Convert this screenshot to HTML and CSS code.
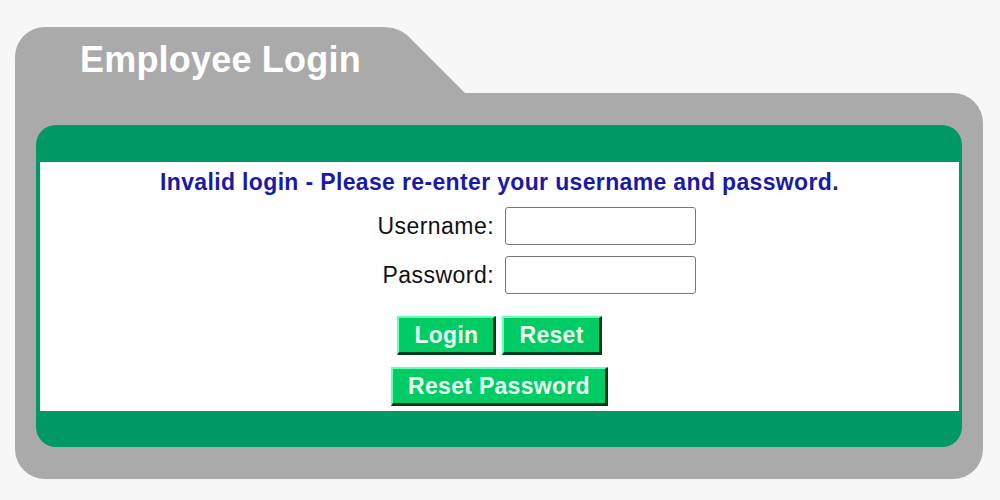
FILE: index.html
```html
<!DOCTYPE html>
<html>
<head>
<meta charset="utf-8">
<title>Employee Login</title>
<link rel="stylesheet" href="styles.css">
</head>
<body>
<div class="folder">
  <div class="tab"><h1 class="title">Employee Login</h1></div>
  <div class="folder-body">
    <div class="panel">
      <form class="panel-inner">
        <p class="error">Invalid login - Please re-enter your username and password.</p>
        <div class="fields">
          <label class="label" for="u">Username:</label>
          <input class="field" id="u" type="text">
          <label class="label" for="p">Password:</label>
          <input class="field" id="p" type="password">
        </div>
        <div class="btn-row">
          <button class="btn" type="button">Login</button>
          <button class="btn" type="reset">Reset</button>
        </div>
        <div class="btn-row">
          <button class="btn" type="button">Reset Password</button>
        </div>
      </form>
    </div>
  </div>
</div>
</body>
</html>
```
FILE: styles.css
```css
html, body {
  margin: 0;
  padding: 0;
  background: #f7f7f7;
  font-family: "Liberation Sans", Arial, sans-serif;
}

.folder {
  width: 968px;
  margin: 27px 0 0 15px;
  display: flex;
  flex-direction: column;
}

.tab {
  width: 450px;
  height: 66px;
  background: #aaaaaa;
  border-top-left-radius: 30px;
  clip-path: polygon(0 0, 368px 0, 378px 1px, 386px 4px, 392px 8px, 398px 14px, 450px 66px, 0 66px);
  box-sizing: border-box;
  padding: 15px 0 0 65px;
}

.title {
  margin: 0;
  font-size: 36px;
  line-height: 36px;
  font-weight: bold;
  letter-spacing: 0.2px;
  color: #ffffff;
}

.folder-body {
  background: #aaaaaa;
  border-radius: 0 30px 30px 30px;
  padding: 32px 21px 32px 21px;
}

.panel {
  background: #009966;
  border-radius: 20px;
  padding: 37px 3px 36px 4px;
}

.panel-inner {
  background: #ffffff;
  height: 249px;
  box-sizing: border-box;
  padding-top: 6px;
  display: flex;
  flex-direction: column;
  align-items: stretch;
  margin: 0;
}

.error {
  margin: 0;
  text-align: center;
  font-size: 23px;
  line-height: 28px;
  font-weight: bold;
  letter-spacing: 0.35px;
  color: #1a1aa8;
}

.fields {
  margin-top: 11px;
  display: grid;
  grid-template-columns: 1fr 1fr;
  column-gap: 11px;
  row-gap: 11px;
  align-items: center;
}

.label {
  justify-self: end;
  font-size: 23px;
  letter-spacing: 0.45px;
  color: #111111;
}

.field {
  justify-self: start;
  width: 191px;
  height: 38px;
  box-sizing: border-box;
  border: 1px solid #777777;
  border-radius: 3px;
  background: #ffffff;
  margin: 0;
}

.btn-row {
  display: flex;
  justify-content: center;
  gap: 6px;
  margin-top: 12px;
}

.fields + .btn-row {
  margin-top: 22px;
}

.btn {
  height: 39px;
  box-sizing: border-box;
  padding: 1px 15px 0;
  margin: 0;
  background: #00cc66;
  color: #e8fff0;
  font-family: "Liberation Sans", Arial, sans-serif;
  font-size: 23px;
  font-weight: bold;
  letter-spacing: 0.3px;
  border-style: solid;
  border-width: 2px 3px 3px 2px;
  border-color: #66ffbb #003b1d #003b1d #66ffbb;
  cursor: pointer;
}
```
